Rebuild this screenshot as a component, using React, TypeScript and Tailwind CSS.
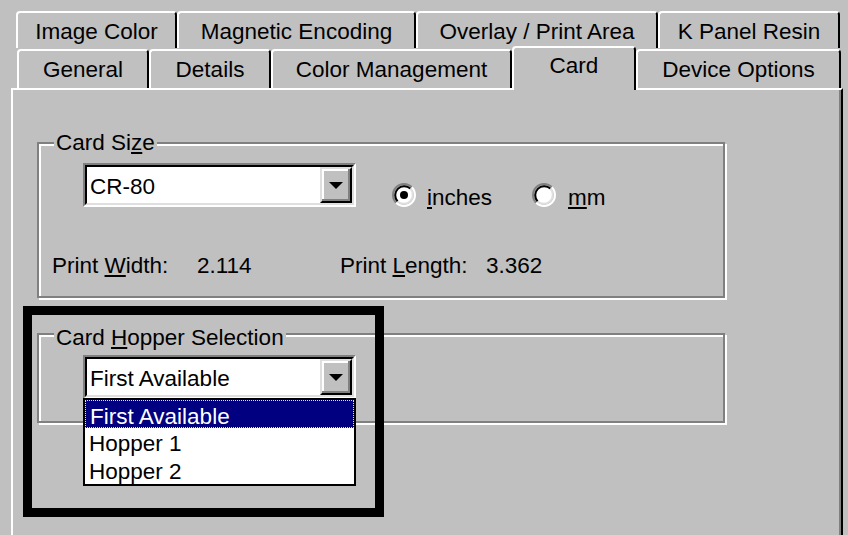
import React from 'react';

interface Tab {
  label: string;
  width: string;
}

const backRow: Tab[] = [
  { label: 'Image Color', width: 'w-[161px]' },
  { label: 'Magnetic Encoding', width: 'w-[239px]' },
  { label: 'Overlay / Print Area', width: 'w-[242px]' },
  { label: 'K Panel Resin', width: 'w-[182px]' },
];

const frontRow: Tab[] = [
  { label: 'General', width: 'w-[132px]' },
  { label: 'Details', width: 'w-[122px]' },
  { label: 'Color Management', width: 'w-[241px]' },
  { label: 'Card', width: 'w-[124px]' },
  { label: 'Device Options', width: 'w-[205px]' },
];

const hoppers = ['First Available', 'Hopper 1', 'Hopper 2'];

function TabButton({ tab, selected }: { tab: Tab; selected?: boolean }) {
  if (selected) {
    return (
      <div
        className={`${tab.width} relative z-10 h-[44px] -mb-[2px] shrink-0 rounded-t-[4px] border-l-2 border-t-2 border-r-2 border-white border-r-black bg-[#c0c0c0] pt-[5px] text-center leading-[25px]`}
      >
        {tab.label}
      </div>
    );
  }
  return (
    <div
      className={`${tab.width} h-[39px] shrink-0 rounded-t-[4px] border-l-2 border-t-2 border-r-2 border-white border-r-black pt-[6px] text-center leading-[25px]`}
    >
      {tab.label}
    </div>
  );
}

function DropButton() {
  return (
    <div className="flex h-full w-[32px] items-center justify-center border-2 border-t-[#dfdfdf] border-l-[#dfdfdf] border-b-black border-r-black bg-[#c0c0c0] shadow-[inset_-2px_-2px_0_#808080,inset_2px_2px_0_#fff]">
      <svg width="14" height="7" viewBox="0 0 14 7">
        <polygon points="0,0 14,0 7,7" fill="#000" />
      </svg>
    </div>
  );
}

function Combo({ value, children }: { value: string; children?: React.ReactNode }) {
  return (
    <div className="relative h-[44px] w-[273px] shrink-0 border-2 border-t-[#808080] border-l-[#808080] border-b-white border-r-white">
      <div className="flex h-full border-2 border-t-black border-l-black border-b-[#dfdfdf] border-r-[#dfdfdf] bg-white">
        <div className="flex-1 pl-[3px] pt-[7px] leading-[25px]">{value}</div>
        <DropButton />
      </div>
      {children}
    </div>
  );
}

function Radio({ checked }: { checked?: boolean }) {
  return (
    <svg width="24" height="24" viewBox="0 0 24 24" className="mt-[2px] shrink-0">
      <circle cx="12" cy="12" r="9" fill="#fff" />
      <path d="M4.22 19.78 A11 11 0 0 1 19.78 4.22" fill="none" stroke="#808080" strokeWidth="2" />
      <path d="M19.78 4.22 A11 11 0 0 1 4.22 19.78" fill="none" stroke="#fff" strokeWidth="2" />
      <path d="M5.64 18.36 A9 9 0 0 1 18.36 5.64" fill="none" stroke="#000" strokeWidth="2" />
      <path d="M18.36 5.64 A9 9 0 0 1 5.64 18.36" fill="none" stroke="#dfdfdf" strokeWidth="2" />
      {checked && <circle cx="12" cy="12" r="4" fill="#000" />}
    </svg>
  );
}

function GroupBox({
  label,
  labelTop,
  className,
  children,
}: {
  label: React.ReactNode;
  labelTop: string;
  className: string;
  children: React.ReactNode;
}) {
  return (
    <div
      className={`relative ml-[24px] w-[688px] border-2 border-[#808080] shadow-[inset_2px_2px_0_#fff,2px_2px_0_#fff] ${className}`}
    >
      <div className={`absolute left-[15px] ${labelTop} bg-[#c0c0c0] px-[2px] leading-[25px]`}>{label}</div>
      {children}
    </div>
  );
}

export default function App() {
  return (
    <div className="relative h-[535px] w-[848px] overflow-hidden bg-[#c0c0c0] pt-[11px] font-['Liberation_Sans',Arial,sans-serif] text-[22.5px] text-black">
      {/* Tab rows */}
      <div className="ml-[16px] flex h-[37px] overflow-hidden">
        {backRow.map((tab) => (
          <TabButton key={tab.label} tab={tab} />
        ))}
      </div>
      <div className="ml-[17px] flex h-[40px] items-end">
        {frontRow.map((tab) => (
          <TabButton key={tab.label} tab={tab} selected={tab.label === 'Card'} />
        ))}
      </div>

      {/* Page */}
      <div className="ml-[11px] h-[449px] w-[832px] border-l-2 border-t-2 border-r-2 border-white border-r-black shadow-[inset_-2px_0_0_#808080]">
        <GroupBox
          className="mt-[52px] h-[156px]"
          labelTop="-top-[14px]"
          label={
            <span>
              Card Si<u className="underline-offset-2">z</u>e
            </span>
          }
        >
          <div className="ml-[44px] mt-[19px] flex h-[44px] items-start">
            <Combo value="CR-80" />
            <div className="ml-[36px] mt-[18px] flex items-start">
              <Radio checked />
              <span className="ml-[11px] pt-[4px] leading-[25px]">
                <u className="underline-offset-2">i</u>nches
              </span>
              <div className="ml-[40px]">
                <Radio />
              </div>
              <span className="ml-[12px] pt-[4px] leading-[25px]">
                <u className="underline-offset-2">m</u>m
              </span>
            </div>
          </div>
          <div className="ml-[13px] mt-[46px] flex leading-[25px]">
            <span className="w-[145px]">
              Print <u className="underline-offset-2">W</u>idth:
            </span>
            <span className="w-[143px]">2.114</span>
            <span className="w-[146px]">
              Print <u className="underline-offset-2">L</u>ength:
            </span>
            <span>3.362</span>
          </div>
        </GroupBox>

        <GroupBox
          className="mt-[35px] h-[90px]"
          labelTop="-top-[10px]"
          label={
            <span>
              Card <u className="underline-offset-2">H</u>opper Selection
            </span>
          }
        >
          <div className="ml-[44px] mt-[20px] flex">
            <Combo value="First Available">
              {/* open list */}
              <div className="absolute -left-[2px] top-[41px] z-20 w-[273px] border-2 border-black bg-white">
                {hoppers.map((h, i) => (
                  <div
                    key={h}
                    className={`h-[28px] pl-[4px] pt-[3px] leading-[25px] ${
                      i === 0 ? 'border border-dotted border-[#ffff00] bg-[#000080] pl-[3px] pt-[2px] text-white' : ''
                    }`}
                  >
                    {h}
                  </div>
                ))}
              </div>
            </Combo>
          </div>
        </GroupBox>
      </div>

      {/* highlight annotation */}
      <div className="pointer-events-none absolute left-[23px] top-[306px] h-[211px] w-[361px] border-[9px] border-black" />
    </div>
  );
}
